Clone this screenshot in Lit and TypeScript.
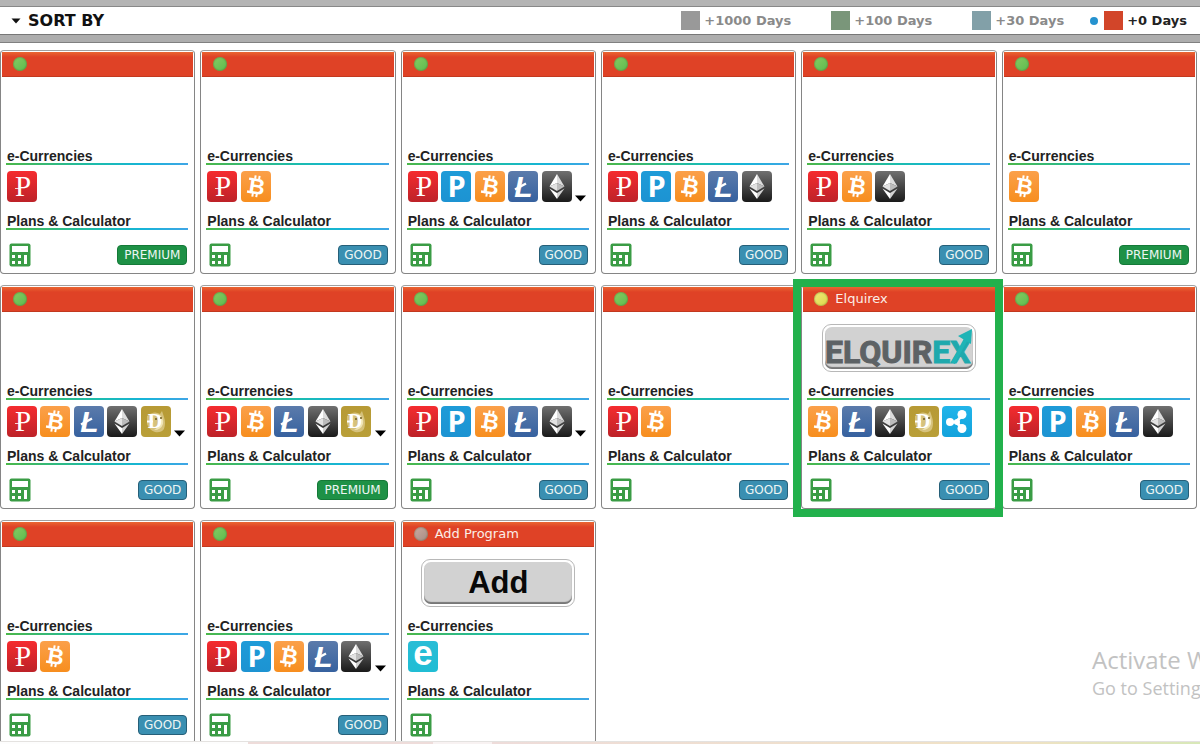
import { LitElement, html, svg, css, nothing } from "lit";
import { customElement, property } from "lit/decorators.js";

type Coin = "perfect" | "payeer" | "bitcoin" | "litecoin" | "ethereum" | "dogecoin" | "ripple" | "epay";

interface Program {
  title?: string;
  status: "paying" | "waiting" | "none";
  banner?: "elquirex" | "add";
  coins: Coin[];
  more?: boolean;
  badge?: "GOOD" | "PREMIUM";
  highlighted?: boolean;
}

const P: Coin = "perfect", Y: Coin = "payeer", B: Coin = "bitcoin", L: Coin = "litecoin",
  E: Coin = "ethereum", D: Coin = "dogecoin", R: Coin = "ripple";

const PROGRAMS: Program[] = [
  { status: "paying", coins: [P], badge: "PREMIUM" },
  { status: "paying", coins: [P, B], badge: "GOOD" },
  { status: "paying", coins: [P, Y, B, L, E], more: true, badge: "GOOD" },
  { status: "paying", coins: [P, Y, B, L, E], badge: "GOOD" },
  { status: "paying", coins: [P, B, E], badge: "GOOD" },
  { status: "paying", coins: [B], badge: "PREMIUM" },
  { status: "paying", coins: [P, B, L, E, D], more: true, badge: "GOOD" },
  { status: "paying", coins: [P, B, L, E, D], more: true, badge: "PREMIUM" },
  { status: "paying", coins: [P, Y, B, L, E], more: true, badge: "GOOD" },
  { status: "paying", coins: [P, B], badge: "GOOD" },
  { title: "Elquirex", status: "waiting", banner: "elquirex", coins: [B, L, E, D, R], badge: "GOOD", highlighted: true },
  { status: "paying", coins: [P, Y, B, L, E], badge: "GOOD" },
  { status: "paying", coins: [P, B], badge: "GOOD" },
  { status: "paying", coins: [P, Y, B, L, E], more: true, badge: "GOOD" },
  { title: "Add Program", status: "none", banner: "add", coins: ["epay"] },
];

const COIN_FILL: Record<Coin, [string, string]> = {
  perfect: ["#f52c2f", "#bd2228"],
  payeer: ["#1d9bd8", "#1d93d2"],
  bitcoin: ["#fba04a", "#f78e1e"],
  litecoin: ["#5b7bab", "#36619f"],
  ethereum: ["#707070", "#1a1a1a"],
  dogecoin: ["#b79a35", "#b99f38"],
  ripple: ["#22b5ea", "#12a2dc"],
  epay: ["#29bdd6", "#20bdd4"],
};

const COIN_MARK = {
  perfect: svg`
    <text x="16" y="25" text-anchor="middle" font-family="Liberation Serif, serif" font-size="29" fill="#fff">P</text>
    <path d="M8 17.500H12" stroke="#fff" stroke-opacity="0.800" stroke-width="1"/>`,
  payeer: svg`
    <text x="15.500" y="26" text-anchor="middle" font-family="Open Sans, sans-serif" font-weight="700" font-size="29" fill="#fff">P</text>`,
  bitcoin: svg`
    <g transform="rotate(9 15 15)">
      <text x="16" y="23" text-anchor="middle" font-family="Liberation Sans, sans-serif" font-weight="700" font-size="22" fill="#fff">B</text>
      <path d="M13 4.500V8M17 4.500V8M13 22V26M17 22V26" stroke="#fff" stroke-width="2"/>
      <path d="M7 8.800H11M7 21.800H11" stroke="#fff" stroke-width="2.400"/>
    </g>`,
  litecoin: svg`
    <text x="15.500" y="26" text-anchor="middle" font-family="Liberation Sans, sans-serif" font-weight="700" font-style="italic" font-size="30" fill="#fff">L</text>
    <path d="M7 18.500L18 12.500" stroke="#fff" stroke-width="2.400"/>`,
  ethereum: svg`
    <path d="M15 3L7.500 15.500L15 12Z" fill="#fff"/><path d="M15 3L22.500 15.500L15 12Z" fill="#dcdcdc"/>
    <path d="M7.500 15.500L15 12V20Z" fill="#e2e2e2"/><path d="M22.500 15.500L15 12V20Z" fill="#bcbcbc"/>
    <path d="M7.500 17.500L15 22V28Z" fill="#fff"/><path d="M22.500 17.500L15 22V28Z" fill="#d2d2d2"/>`,
  dogecoin: svg`
    <path d="M6 10Q13 4 19 8L21 5L23 11Q25 17 23 23Q20 27 14 26Q8 24 6 18Z" fill="#d6c27c"/>
    <path d="M17 8Q23 11 22 18Q20 24 13 24Q19 21 19 15Q19 11 17 8Z" fill="#efe5b8"/>
    <text x="14" y="22" text-anchor="middle" font-family="Liberation Serif, serif" font-weight="700" font-size="20" fill="#fff">D</text>
    <path d="M6 15.500H12" stroke="#fff" stroke-width="2"/>
    <circle cx="15" cy="13" r="1" fill="#6d5a1c"/><circle cx="20" cy="12" r="1" fill="#6d5a1c"/>`,
  ripple: svg`
    <path d="M7.500 16H14L20 9.500M14 16L20 22" stroke="#fff" stroke-width="3" fill="none"/>
    <circle cx="8" cy="16" r="4" fill="#fff"/><circle cx="20" cy="8.500" r="4.500" fill="#fff"/><circle cx="20" cy="22.500" r="4.500" fill="#fff"/>
    <circle cx="15" cy="16" r="3" fill="#fff"/>`,
  epay: svg`
    <text x="15" y="24" text-anchor="middle" font-family="Liberation Sans, sans-serif" font-weight="700" font-size="35" fill="#fff">e</text>`,
};

@customElement("coin-icon")
class CoinIcon extends LitElement {
  @property() coin: Coin = "bitcoin";
  static styles = css`
    :host { display: block; height: 31px; }
    svg { display: block; width: 30px; height: 31px; }
  `;
  render() {
    const [top, bottom] = COIN_FILL[this.coin];
    return html`<svg viewBox="0 0 30 31" aria-hidden="true">
      <defs><linearGradient id="g" x1="0" y1="0" x2="0" y2="1">
        <stop offset="0" stop-color=${top}/><stop offset="1" stop-color=${bottom}/>
      </linearGradient></defs>
      <rect width="30" height="31" rx="4" fill="url(#g)"/>
      ${COIN_MARK[this.coin]}
    </svg>`;
  }
}

@customElement("program-card")
class ProgramCard extends LitElement {
  @property({ attribute: false }) program!: Program;
  static styles = css`
    :host { display: block; position: relative; font-family: "Liberation Sans", Arial, sans-serif; }
    .card {
      padding: 1px; background: #fff;
      border: 1px solid #858585; border-top-color: #a0a0a0; border-radius: 4px;
    }
    .head {
      box-sizing: border-box; height: 25px; display: flex; align-items: center; gap: 7px; padding-left: 11px;
      background: linear-gradient(#ea6632, #df4226 5px); border-bottom: 1px solid #c2391f;
      font: 13px/24px "DejaVu Sans", Verdana, sans-serif; color: #fbeee6;
    }
    .dot { width: 14px; height: 14px; border-radius: 50%; box-shadow: inset 0 0 1px 1px rgba(60, 80, 30, 0.25); }
    .paying { background: linear-gradient(135deg, #86cb62, #5dbb4f); }
    .waiting { background: linear-gradient(135deg, #f0ec78, #dcd54a); }
    .none { background: linear-gradient(135deg, #cdaaa0, #a58d86); }
    .banner { height: 73px; display: flex; justify-content: center; align-items: flex-start; padding-top: 12px; box-sizing: border-box; }
    .frame {
      box-sizing: border-box; width: 154px; height: 48px; padding: 2px; border: 1px solid #b8b8b8;
      border-radius: 9px; background: #fff; display: block; cursor: pointer;
    }
    .plate {
      display: flex; justify-content: center; align-items: center; height: 100%; box-sizing: border-box;
      border-radius: 7px; background: #d2d2d2; box-shadow: inset 0 -2px 1px #777;
      font: bold 31px/42px "Liberation Sans", Arial, sans-serif; color: #080808;
    }
    .plate svg { display: block; width: 148px; height: 42px; overflow: visible; }
    .body { padding: 0 5px 5px 4px; }
    h3 {
      margin: 0; padding: 0 1px; font-size: 14px; line-height: 13px; font-weight: 700; color: #222;
      border-bottom: 2px solid; border-image: linear-gradient(90deg, #4cb748, #1bbcae 50%, #16b4d8 75%, #41a5e6) 1;
    }
    .coins { display: grid; grid-template-columns: repeat(5, 1fr) 14px; padding: 6px 0 13px 1px; align-items: end; }
    .more { border: 0; padding: 0; background: none; height: 7px; display: block; cursor: pointer; }
    .more svg { display: block; }
    .foot { display: flex; justify-content: space-between; align-items: center; padding: 12px 1px 0 3px; height: 25px; }
    .calc { display: block; width: 22px; height: 24px; }
    .calc svg { display: block; }
    .badge {
      box-sizing: border-box; height: 20px; padding: 0 5px; border-radius: 4px; color: #eef6f4;
      font: 12px/18px "DejaVu Sans", Verdana, sans-serif;
    }
    .good { background: #3a8fb1; border: 1px solid #265f78; }
    .premium { background: #1e9146; border: 1px solid #157a38; padding: 0 6px; }
    .mark { position: absolute; inset: -6px -6px -8px -8px; border: 8px solid #22b14c; z-index: 2; pointer-events: none; }
  `;

  private banner() {
    const { banner } = this.program;
    if (!banner) return nothing;
    if (banner === "add") return html`<button class="frame"><span class="plate">Add</span></button>`;
    return html`<a class="frame" href="#elquirex" aria-label="Elquirex"><span class="plate">
      <svg viewBox="0 0 148 42" font-family="Roboto, sans-serif" font-weight="700" font-size="32">
        <text x="0" y="36" fill="#5d6265" stroke="#5d6265">ELQUIR<tspan fill="#1fa9ad" stroke="#1fa9ad">EX</tspan></text>
        <path d="M128 36L141 12" fill="none" stroke="#1fb4b6" stroke-width="4"/>
        <path d="M133 9L147 2L146 17Z" fill="#1fb4b6"/>
      </svg></span></a>`;
  }

  render() {
    const p = this.program;
    return html`
      <article class="card">
        <header class="head"><span class="dot ${p.status}"></span>${p.title ? html`<span>${p.title}</span>` : nothing}</header>
        <div class="banner">${this.banner()}</div>
        <div class="body">
          <h3>e-Currencies</h3>
          <div class="coins">
            ${p.coins.map((c) => html`<coin-icon .coin=${c}></coin-icon>`)}
            ${p.more ? html`<button class="more" aria-label="More currencies">
              <svg width="12" height="7" viewBox="0 0 12 7"><path d="M0 0.500H11L5.500 6.500Z" fill="#000"/></svg></button>` : nothing}
          </div>
          <h3>Plans &amp; Calculator</h3>
          <div class="foot">
            <a class="calc" href="#calculator" aria-label="Calculator">
              <svg width="22" height="24" viewBox="0 0 22 24">
                <rect x="0.500" y="0.500" width="21" height="23" rx="2" fill="#3a9c45"/>
                <rect x="3" y="3" width="16" height="6" fill="#fff"/>
                <path d="M3 12h3v3H3zM9 12h3v3H9zM3 18h3v3H3zM9 18h3v3H9zM15 12h3v9h-3z" fill="#fff"/>
              </svg>
            </a>
            ${p.badge ? html`<span class="badge ${p.badge.toLowerCase()}">${p.badge}</span>` : nothing}
          </div>
        </div>
      </article>
      ${p.highlighted ? html`<div class="mark"></div>` : nothing}
    `;
  }
}

const AGES = [
  { label: "+1000 Days", color: "#999999" },
  { label: "+100 Days", color: "#7a967a" },
  { label: "+30 Days", color: "#82a0a8" },
  { label: "+0 Days", color: "#d24529", active: true },
];

@customElement("app-root")
class AppRoot extends LitElement {
  static styles = css`
    :host { display: block; position: relative; height: 100vh; overflow: hidden; background: #fff; }
    .bar {
      box-sizing: border-box; display: flex; justify-content: space-between; align-items: center; height: 42px;
      padding: 0 13px 0 11px; border-top: 6px solid #b4b4b4; border-bottom: 7px solid #adadad;
      box-shadow: inset 0 1px #888, inset 0 -1px #777, 0 1px #808080; background: #fff;
      font-family: "DejaVu Sans", Verdana, sans-serif;
    }
    button { border: 0; background: none; padding: 0; font-family: inherit; font-weight: 700; display: flex; align-items: center; cursor: pointer; }
    .sort { gap: 7px; font-size: 16px; line-height: 20px; color: #111; }
    .ages { display: flex; gap: 40px; }
    .age { gap: 4px; font-size: 13px; line-height: 20px; color: #8a8a8a; }
    .age.active { color: #222; margin-left: -14px; }
    .swatch { width: 19px; height: 19px; }
    .pin { width: 8px; height: 8px; border-radius: 50%; background: #2592cf; margin-right: 2px; }
    .grid { display: grid; grid-template-columns: repeat(6, 1fr); gap: 11px 5px; padding: 8px 3px 0 0; }
    .notice { position: absolute; left: 1092px; bottom: 44px; white-space: nowrap; font-family: "Open Sans", "Noto Sans", sans-serif; color: #c2c2c2; }
    .notice p { margin: 0; font-size: 18px; line-height: 24px; }
    .notice .lead { font-size: 24px; line-height: 32px; }
    .edge {
      position: absolute; left: 0; right: 0; bottom: 0; height: 3px; border-top: 1px solid #e4e2e0; box-sizing: border-box;
      background: linear-gradient(90deg, #fdfdfd 0 248px, #eedcda 248px 433px, #f8f2f2 433px 492px, #eedcda 492px, #f0e2c4 85%, #d8e8b8);
    }
  `;
  render() {
    return html`
      <nav class="bar">
        <button class="sort"><svg width="10" height="6" viewBox="0 0 10 6" aria-hidden="true"><path d="M0.500 0.500H9.500L5 5.500Z" fill="#111"/></svg>SORT BY</button>
        <div class="ages">
          ${AGES.map((a) => html`<button class="age ${a.active ? "active" : ""}">
            ${a.active ? html`<span class="pin"></span>` : nothing}<span class="swatch" style="background:${a.color}"></span>${a.label}</button>`)}
        </div>
      </nav>
      <main class="grid">${PROGRAMS.map((p) => html`<program-card .program=${p}></program-card>`)}</main>
      <aside class="notice"><p class="lead">Activate W</p><p>Go to Setting</p></aside>
      <div class="edge"></div>
    `;
  }
}
